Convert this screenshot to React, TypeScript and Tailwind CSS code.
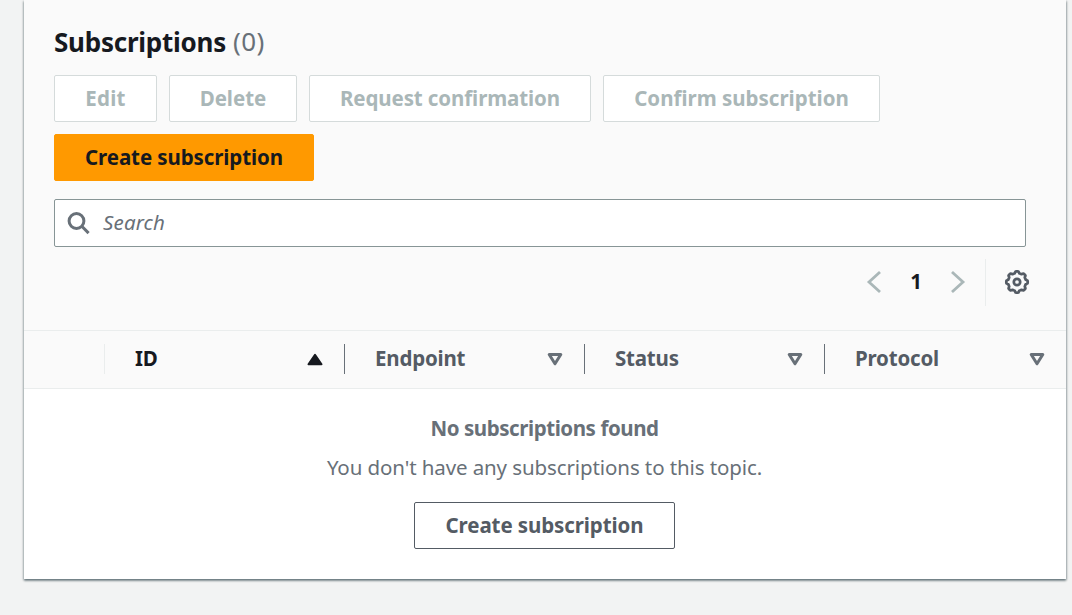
import type { ReactNode } from "react";

const outlined = "flex h-[47px] items-center justify-center whitespace-nowrap rounded-[2px] border text-[20.5px] font-bold";

function Chevron({ d }: { d: string }) {
  return (
    <svg width="16" height="24" viewBox="0 0 16 24" fill="none" stroke="#aab7b8" strokeWidth="2.8">
      <path d={d} />
    </svg>
  );
}

function SortDown() {
  return (
    <svg width="16" height="14" viewBox="0 0 16 14" fill="none" stroke="#687078" strokeWidth="3" strokeLinejoin="round">
      <path d="M2.2 2.5h11.6L8 11.8Z" />
    </svg>
  );
}

function Header({ width, children, icon, divider }: { width: string; children: ReactNode; icon: ReactNode; divider: string }) {
  return (
    <div className={`flex h-[30px] items-center justify-between border-l pl-[30px] ${width} ${divider}`}>
      <span className="pb-[2px]">{children}</span>
      {icon}
    </div>
  );
}

function Gear() {
  const points = Array.from({ length: 97 }, (_, i) => {
    const a = (i / 96) * Math.PI * 2;
    const r = 9.8 + 0.9 * Math.tanh(3 * Math.cos(a * 8));
    return `${(13 + r * Math.sin(a)).toFixed(2)},${(13 - r * Math.cos(a)).toFixed(2)}`;
  }).join(" ");
  return (
    <svg width="26" height="26" viewBox="0 0 26 26" fill="none" stroke="#545b64" strokeLinejoin="round">
      <polygon points={points} strokeWidth="2.7" />
      <circle cx="13" cy="13" r="3.2" strokeWidth="2.7" />
    </svg>
  );
}

export default function App() {
  return (
    <div className="h-[615px] overflow-hidden bg-[#f2f3f3] pl-6 font-['Noto_Sans',sans-serif] text-[#687078]">
      <main className="h-[579px] w-[1042px] bg-white shadow-[0_2px_2px_0_rgba(0,28,36,0.35),1px_1px_2px_0_rgba(0,28,36,0.25),-1px_1px_2px_0_rgba(0,28,36,0.2)]">
        <section className="h-[331px] border-b border-[#eaeded] bg-[#fafafa] pl-[30px] pt-[24px]">
          <h1 className="flex h-[36px] items-center whitespace-nowrap text-[26px] font-bold text-[#16191f]">
            <span className="w-[179px] tracking-[-0.25px]">Subscriptions</span>
            <span className="pb-px font-normal tracking-[0.4px] text-[#687078]">(0)</span>
          </h1>
          <div className="mt-[15px] flex gap-3 text-[#aab7b8]">
            <button className={`${outlined} w-[103px] border-[#d5dbdb] bg-white pb-px tracking-[0.2px]`}>Edit</button>
            <button className={`${outlined} w-[128px] border-[#d5dbdb] bg-white pb-px`}>Delete</button>
            <button className={`${outlined} w-[282px] border-[#d5dbdb] bg-white pb-px tracking-[-0.1px]`}>Request confirmation</button>
            <button className={`${outlined} w-[277px] border-[#d5dbdb] bg-white pb-px`}>Confirm subscription</button>
          </div>
          <button className={`${outlined} mt-3 w-[260px] border-[#ff9900] bg-[#ff9900] pb-px tracking-[-0.1px] text-[#16191f]`}>Create subscription</button>
          <div className="mt-[18px] flex h-[48px] w-[972px] items-center rounded-[2px] border border-[#879596] bg-white pl-3">
            <svg width="24" height="24" viewBox="0 0 24 24" fill="none" stroke="#687078" strokeWidth="3">
              <circle cx="9.5" cy="10" r="7.4" />
              <path d="m14.8 15.3 6.8 6.8" />
            </svg>
            <span className="ml-3 pb-[2px] text-[20.5px] italic tracking-[0.15px]">Search</span>
          </div>
          <div className="mt-[12px] flex h-[47px] items-center">
            <div className="ml-[812px] pb-[2px]"><Chevron d="M14 2 3 12l11 10" /></div>
            <span className="ml-[27px] w-[14px] pb-[2px] text-center text-[20.5px] font-bold text-[#16191f]">1</span>
            <div className="ml-[27px] pb-[2px]"><Chevron d="m2 2 11 10L2 22" /></div>
            <div className="ml-[19px] h-[47px] w-px bg-[#eaeded]" />
            <div className="ml-[18px] pb-[2px]"><Gear /></div>
          </div>
        </section>
        <section className="flex h-[58px] items-center border-b border-[#eaeded] bg-[#fafafa] pl-[80px] pb-px text-[20.5px] font-bold tracking-[-0.2px] text-[#545b64]">
          <Header width="w-[240px] pr-[21px]" divider="border-[#eaeded]" icon={
            <svg width="16" height="14" viewBox="0 0 16 14" fill="#16191f" stroke="#16191f" strokeWidth="2" strokeLinejoin="round"><path d="M1.5 12.2h13L8 2.9Z" /></svg>
          }><span className="text-[#16191f]">ID</span></Header>
          <Header width="w-[240px] pr-[21px]" divider="border-[#687078]" icon={<SortDown />}>Endpoint</Header>
          <Header width="w-[240px] pr-[21px]" divider="border-[#687078]" icon={<SortDown />}>Status</Header>
          <Header width="w-[242px] pr-[21px]" divider="border-[#687078]" icon={<SortDown />}>Protocol</Header>
        </section>
        <section className="flex flex-col items-center whitespace-nowrap pr-px pt-[23px] text-[20.5px]">
          <strong className="h-[32px] leading-[32px] tracking-[-0.43px]">No subscriptions found</strong>
          <p className="mt-[7px] h-[32px] leading-[32px] tracking-[-0.1px]">You don't have any subscriptions to this topic.</p>
          <button className={`${outlined} mt-[19px] w-[261px] border-[#545b64] bg-white tracking-[-0.1px] text-[#545b64]`}>Create subscription</button>
        </section>
      </main>
    </div>
  );
}
